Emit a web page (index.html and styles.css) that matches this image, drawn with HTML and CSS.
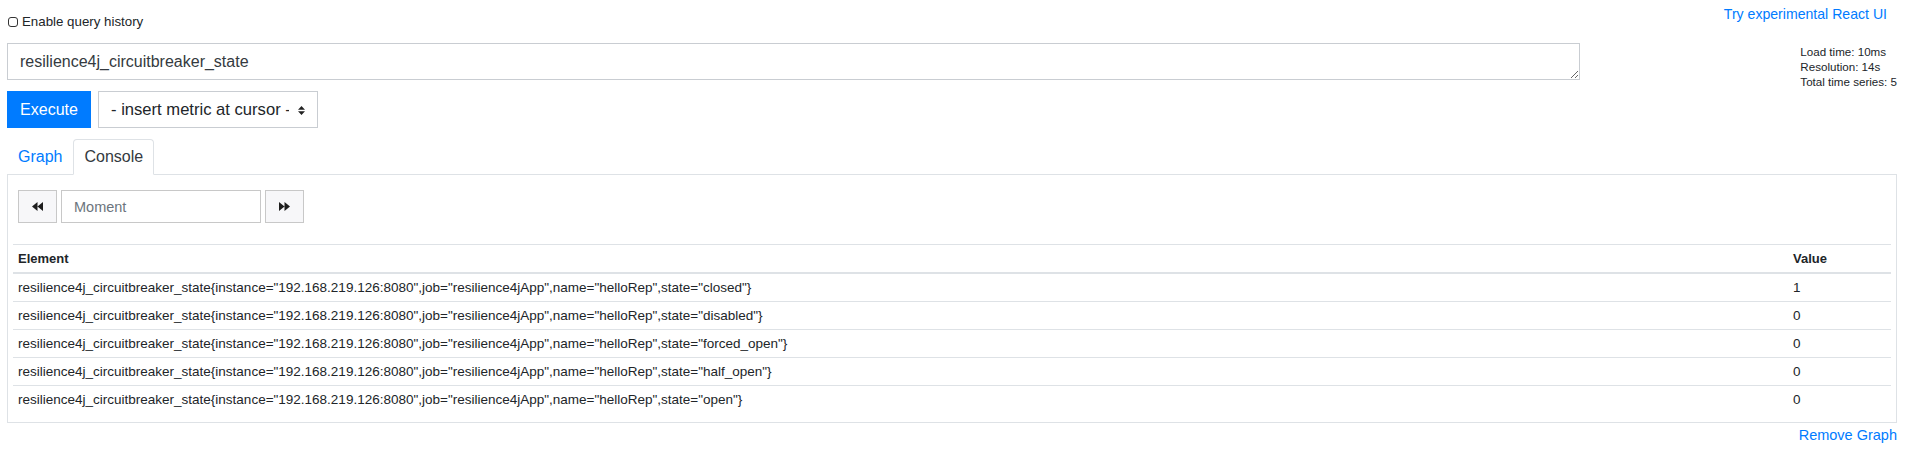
FILE: index.html
```html
<!DOCTYPE html>
<html>
<head>
<meta charset="utf-8">
<link rel="stylesheet" href="styles.css">
</head>
<body>
<div class="page">
  <div class="topbar">
    <label class="history"><input type="checkbox" class="check"> Enable query history</label>
    <a class="react-link" href="#">Try experimental React UI</a>
  </div>

  <div class="expr-row">
    <textarea class="expr" rows="1">resilience4j_circuitbreaker_state</textarea>
    <div class="stats">
      <div>Load time: 10ms</div>
      <div>Resolution: 14s</div>
      <div>Total time series: 5</div>
    </div>
  </div>

  <div class="exec-row">
    <button class="execute">Execute</button>
    <div class="select-wrap">
      <select class="metric"><option>- insert metric at cursor -</option></select>
      <svg class="select-arrows" width="7" height="9" viewBox="0 0 7 9"><path d="M3.5 0 L7 3.8 H0 Z M3.5 9 L7 5.2 H0 Z" fill="#222"/></svg>
    </div>
  </div>

  <ul class="tabs">
    <li class="tab"><a href="#">Graph</a></li>
    <li class="tab active"><a href="#">Console</a></li>
  </ul>

  <div class="panel">
    <div class="moment-row">
      <button class="nav-btn" aria-label="back">
        <svg width="11" height="9" viewBox="0 0 11 9"><path d="M5.5 0 V9 L0 4.5 Z M11 0 V9 L5.5 4.5 Z" fill="#1e1e1e"/></svg>
      </button>
      <input class="moment" type="text" placeholder="Moment">
      <button class="nav-btn" aria-label="forward">
        <svg width="11" height="9" viewBox="0 0 11 9"><path d="M0 0 V9 L5.5 4.5 Z M5.5 0 V9 L11 4.5 Z" fill="#1e1e1e"/></svg>
      </button>
    </div>

    <table class="results">
      <thead>
        <tr><th>Element</th><th class="value">Value</th></tr>
      </thead>
      <tbody>
        <tr><td>resilience4j_circuitbreaker_state{instance="192.168.219.126:8080",job="resilience4jApp",name="helloRep",state="closed"}</td><td>1</td></tr>
        <tr><td>resilience4j_circuitbreaker_state{instance="192.168.219.126:8080",job="resilience4jApp",name="helloRep",state="disabled"}</td><td>0</td></tr>
        <tr><td>resilience4j_circuitbreaker_state{instance="192.168.219.126:8080",job="resilience4jApp",name="helloRep",state="forced_open"}</td><td>0</td></tr>
        <tr><td>resilience4j_circuitbreaker_state{instance="192.168.219.126:8080",job="resilience4jApp",name="helloRep",state="half_open"}</td><td>0</td></tr>
        <tr><td>resilience4j_circuitbreaker_state{instance="192.168.219.126:8080",job="resilience4jApp",name="helloRep",state="open"}</td><td>0</td></tr>
      </tbody>
    </table>
  </div>

  <div class="remove-row"><a href="#" class="remove">Remove Graph</a></div>
</div>
</body>
</html>
```

FILE: styles.css
```css
* { box-sizing: border-box; }

html, body {
  margin: 0;
  padding: 0;
  background: #fff;
}

body {
  font-family: "Liberation Sans", Arial, sans-serif;
  color: #212529;
  font-size: 16px;
}

a { color: #007bff; text-decoration: none; }

.page {
  padding: 0 10px 0 7px;
}

.topbar {
  display: flex;
  justify-content: space-between;
  align-items: flex-start;
  height: 43px;
}

.history {
  display: flex;
  align-items: center;
  gap: 4px;
  margin-top: 13px;
  margin-left: 1px;
  font-size: 13.3px;
  line-height: 18px;
}

.check {
  appearance: none;
  -webkit-appearance: none;
  width: 10px;
  height: 10px;
  margin: 0;
  border: 1.6px solid #333;
  border-radius: 3px;
  background: #fff;
}

.react-link {
  margin-top: 4px;
  margin-right: 10px;
  font-size: 14.1px;
  line-height: 20px;
}

.expr-row {
  display: grid;
  grid-template-columns: 1573px 1fr;
  align-items: start;
}

.expr {
  display: block;
  width: 100%;
  height: 37px;
  padding: 6px 12px;
  border: 1px solid #c9cdd2;
  border-radius: 0;
  font-family: "Liberation Sans", Arial, sans-serif;
  font-size: 16px;
  line-height: 24px;
  color: #343a40;
  resize: vertical;
  overflow: hidden;
}

.stats {
  justify-self: end;
  font-size: 11.6px;
  line-height: 15px;
  color: #212529;
  padding-top: 1px;
}

.exec-row {
  display: flex;
  gap: 7px;
  margin-top: 2px;
}

.execute {
  height: 37px;
  width: 84px;
  padding: 0;
  border: 1px solid #007bff;
  border-radius: 0;
  background: #007bff;
  color: #fff;
  font-family: "Liberation Sans", Arial, sans-serif;
  font-size: 16px;
}

.select-wrap {
  position: relative;
  width: 220px;
  height: 37px;
}

.metric {
  appearance: none;
  -webkit-appearance: none;
  width: 100%;
  height: 100%;
  padding: 0 28px 0 12px;
  border: 1px solid #c9cdd2;
  border-radius: 0;
  background: #fff;
  font-family: "Liberation Sans", Arial, sans-serif;
  font-size: 16.6px;
  color: #212529;
}

.select-arrows {
  position: absolute;
  left: 200px;
  top: 15px;
  pointer-events: none;
}

.tabs {
  display: flex;
  list-style: none;
  margin: 11px 0 0;
  padding: 0;
  border-bottom: 1px solid #dee2e6;
}

.tab {
  margin-bottom: -1px;
}

.tab a {
  display: block;
  padding: 5px 10px;
  line-height: 24px;
  font-size: 16px;
  border: 1px solid transparent;
  border-top-left-radius: 4px;
  border-top-right-radius: 4px;
}

.tab.active a {
  color: #343a40;
  background: #fff;
  border-color: #dee2e6 #dee2e6 #fff;
}

.panel {
  border: 1px solid #dee2e6;
  border-top: none;
  padding: 15px 5px 9px;
}

.moment-row {
  display: flex;
  gap: 4px;
  margin-left: 5px;
  margin-bottom: 21px;
}

.nav-btn {
  display: flex;
  align-items: center;
  justify-content: center;
  width: 39px;
  height: 33px;
  padding: 0;
  border: 1px solid #c8c8c8;
  border-radius: 0;
  background: #f7f7f9;
}

.moment {
  width: 200px;
  height: 33px;
  padding: 0 12px;
  border: 1px solid #c8c8c8;
  border-radius: 0;
  font-family: "Liberation Sans", Arial, sans-serif;
  font-size: 14.5px;
  color: #495057;
}

.moment::placeholder { color: #6c757d; }

.results {
  width: 100%;
  border-collapse: collapse;
  font-size: 13.5px;
  line-height: 19px;
}

.results th,
.results td {
  text-align: left;
  padding: 4px 5px;
  border-top: 1px solid #dee2e6;
}

.results th {
  font-size: 13px;
  font-weight: bold;
  border-bottom: 2px solid #dee2e6;
}

.results .value { width: 103px; }

.remove-row {
  display: flex;
  justify-content: flex-end;
  margin-top: 2px;
}

.remove {
  font-size: 14.5px;
  line-height: 20px;
}
```
